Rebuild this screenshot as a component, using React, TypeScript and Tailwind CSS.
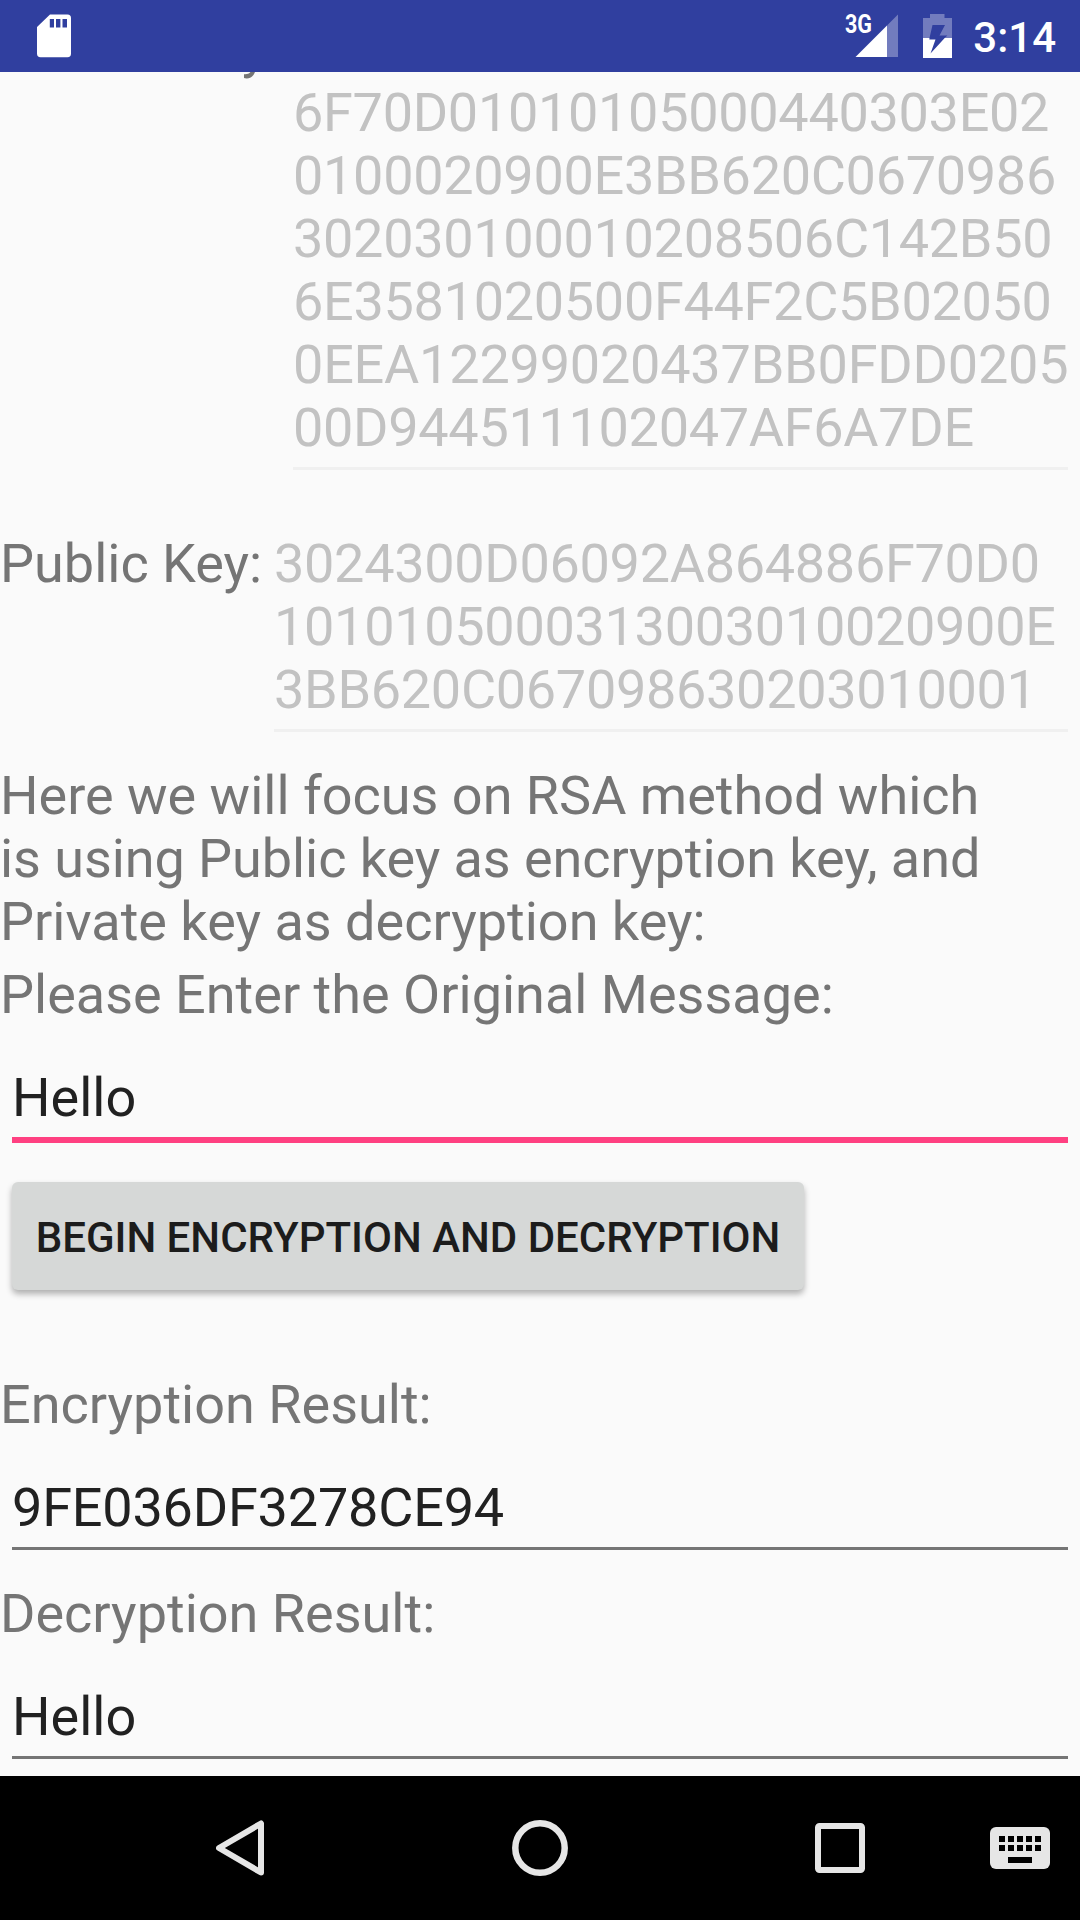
import React from "react";

const KEY = "text-[#c2c2c2] tracking-[-0.3px]";
const LABEL = "text-[#757575]";

export default function App() {
  return (
    <div className="flex h-[1920px] w-[1080px] flex-col overflow-hidden bg-[#fafafa] font-[Roboto,sans-serif] text-[54px] leading-[63px] whitespace-nowrap">
      <header className="flex h-[72px] shrink-0 items-center bg-[#303f9f] text-white">
        <svg className="ml-[37px] h-[72px] w-[34px]" viewBox="0 0 34 72" fill="#fff">
          <path fillRule="evenodd" d="M13 14.5H30.500Q34 14.500 34 18V53.500Q34 57.300 30.500 57.300H3.500Q0 57.300 0 53.500V27ZM12.800 19V27.500H17V19ZM19 19V27.500H23.400V19ZM25.500 19V27.500H30V19Z" />
        </svg>
        <div className="ml-auto flex h-full items-center">
          <svg className="h-[72px] w-[110px]" viewBox="0 0 110 72">
            <text x="0" y="33.300" fontSize="25" fontWeight="700" textLength="27" lengthAdjust="spacingAndGlyphs" fill="#fff">3G</text>
            <path d="M53 14.500V57H42V25.500Z" fill="#fff" fillOpacity=".32" />
            <path d="M42 25.500V57H10.500Z" fill="#fff" />
            <path fillRule="evenodd" d="M85 14H99.500V18H107V38H99.700L102.400 35.500H94.500L100 25H87.500L84.500 38H78V18H85Z" fill="#fff" fillOpacity=".32" />
            <path fillRule="evenodd" d="M78 38H84.500L84.300 39.500H90.500L85.500 53.500L99.700 38H107V58H78Z" fill="#fff" />
          </svg>
          <span className="mt-[2px] mr-[24px] ml-[18px] text-[42px] font-medium">3:14</span>
        </div>
      </header>
      <main className="h-[1704px] shrink-0 overflow-hidden">
        <div className={`flex h-[396px] ${LABEL}`}>
          <div className="-mt-[55px] w-[293px]">Private Key:</div>
          <div className={`mt-[9px] h-[389px] w-[775px] border-b-[3px] border-[#f0f0f0] ${KEY}`}>
            <p>6F70D01010105000440303E02</p><p>0100020900E3BB620C0670986</p><p>302030100010208506C142B50</p><p>6E3581020500F44F2C5B02050</p><p className="tracking-[-0.21px]">0EEA12299020437BB0FDD0205</p><p>00D944511102047AF6A7DE</p>
          </div>
        </div>
        <div className={`mt-[64px] flex ${LABEL}`}>
          <div className="w-[274px]">Public Key:</div>
          <div className={`h-[200px] w-[794px] border-b-[3px] border-[#f0f0f0] ${KEY}`}>
            <p>3024300D06092A864886F70D0</p><p>1010105000313003010020900E</p><p>3BB620C067098630203010001</p>
          </div>
        </div>
        <div className={LABEL}>
          <div className="mt-[32px]"><p>Here we will focus on RSA method which</p><p className="tracking-[-0.07px]">is using Public key as encryption key, and</p><p>Private key as decryption key:</p></div>
          <p className="mt-[10px]">Please Enter the Original Message:</p>
        </div>
        <div className="mx-[12px] mt-[40px] h-[77px] border-b-[6px] border-[#ff4081] text-[#212121]">Hello</div>
        <button className="mt-[39px] ml-[12px] flex h-[108px] w-[792px] items-center justify-center rounded-[6px] bg-[#d6d8d7] pt-[2px] text-[42px] font-medium text-[#1c1c1c] shadow-[0_4px_6px_rgba(0,0,0,0.3)]">BEGIN ENCRYPTION AND DECRYPTION</button>
        <p className={`mt-[83px] ${LABEL}`}>Encryption Result:</p>
        <div className="mx-[12px] mt-[40px] h-[74px] border-b-[3px] border-[#757575] tracking-[-0.2px] text-[#212121]">9FE036DF3278CE94</div>
        <p className={`mt-[32px] ${LABEL}`}>Decryption Result:</p>
        <div className="mx-[12px] mt-[40px] h-[74px] border-b-[3px] border-[#757575] text-[#212121]">Hello</div>
      </main>
      <nav className="flex h-[144px] shrink-0 items-center bg-black">
        <svg className="ml-[216px] h-[56px] w-[48px]" viewBox="0 0 48 56" fill="none" stroke="#e6e6e6" strokeWidth="6" strokeLinejoin="round"><path d="M45 3.500V52.500L3 28Z" /></svg>
        <svg className="ml-[248px] h-[56px] w-[56px]" viewBox="0 0 56 56" fill="none" stroke="#e6e6e6" strokeWidth="6.500"><circle cx="28" cy="28" r="24.700" /></svg>
        <svg className="ml-[247px] h-[50px] w-[50px]" viewBox="0 0 50 50" fill="none" stroke="#e6e6e6" strokeWidth="6" strokeLinejoin="round"><rect x="3" y="3" width="44" height="44" rx="1.500" /></svg>
        <svg className="ml-[125px] h-[42px] w-[60px]" viewBox="0 0 60 42"><rect width="60" height="42" rx="6" fill="#e6e6e6" /><path d="M9 9h6v6H9zM18 9h6v6h-6zM27 9h6v6h-6zM36 9h6v6h-6zM45 9h6v6h-6zM9 18h6v6H9zM18 18h6v6h-6zM27 18h6v6h-6zM36 18h6v6h-6zM45 18h6v6h-6zM18 30h24v6H18z" fill="#000" /></svg>
      </nav>
    </div>
  );
}
